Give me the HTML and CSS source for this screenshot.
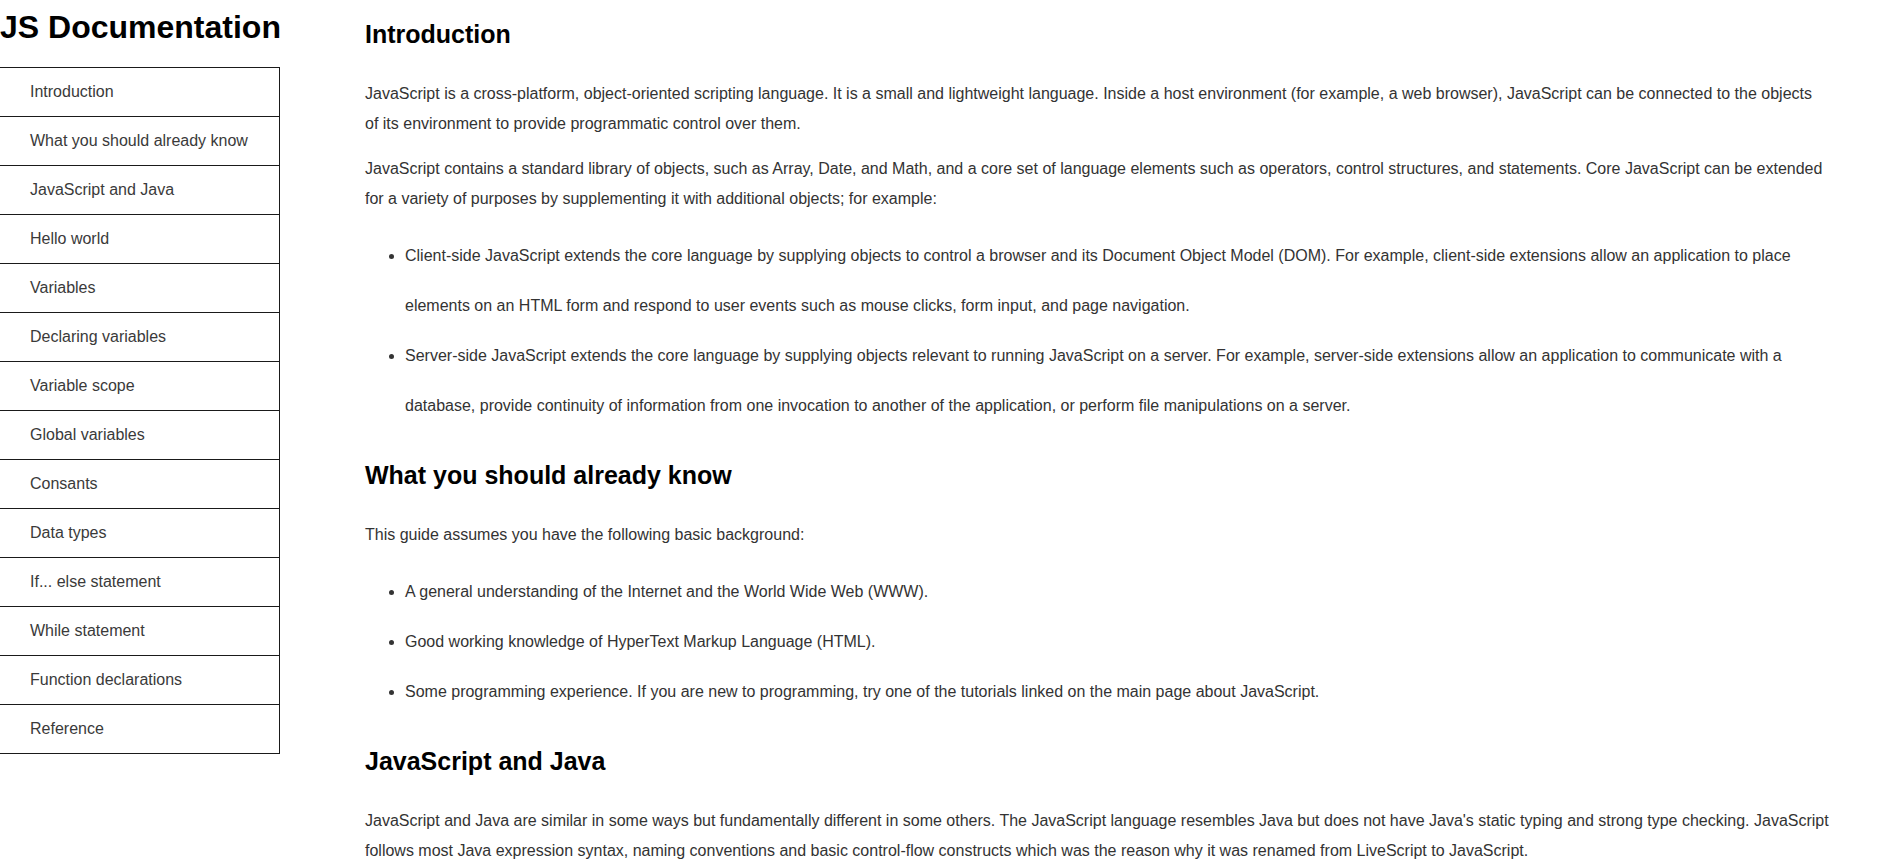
FILE: index.html
```html
<!DOCTYPE html>
<html lang="en">
<head>
<meta charset="utf-8">
<title>JS Documentation</title>
<link rel="stylesheet" href="styles.css">
</head>
<body>
<div class="page">
  <nav id="navbar" class="sidebar">
    <header class="sidebar-title">JS Documentation</header>
    <ul class="nav-list">
      <li><a class="nav-link" href="#Introduction">Introduction</a></li>
      <li><a class="nav-link" href="#What_you_should_already_know">What you should already know</a></li>
      <li><a class="nav-link" href="#JavaScript_and_Java">JavaScript and Java</a></li>
      <li><a class="nav-link" href="#Hello_world">Hello world</a></li>
      <li><a class="nav-link" href="#Variables">Variables</a></li>
      <li><a class="nav-link" href="#Declaring_variables">Declaring variables</a></li>
      <li><a class="nav-link" href="#Variable_scope">Variable scope</a></li>
      <li><a class="nav-link" href="#Global_variables">Global variables</a></li>
      <li><a class="nav-link" href="#Consants">Consants</a></li>
      <li><a class="nav-link" href="#Data_types">Data types</a></li>
      <li><a class="nav-link" href="#If_else_statement">If... else statement</a></li>
      <li><a class="nav-link" href="#While_statement">While statement</a></li>
      <li><a class="nav-link" href="#Function_declarations">Function declarations</a></li>
      <li><a class="nav-link" href="#Reference">Reference</a></li>
    </ul>
  </nav>
  <main id="main-doc" class="main">
    <section class="main-section" id="Introduction">
      <h2 class="section-title">Introduction</h2>
      <p>JavaScript is a cross-platform, object-oriented scripting language. It is a small and lightweight language. Inside a host environment (for example, a web browser), JavaScript can be connected to the objects of its environment to provide programmatic control over them.</p>
      <p>JavaScript contains a standard library of objects, such as Array, Date, and Math, and a core set of language elements such as operators, control structures, and statements. Core JavaScript can be extended for a variety of purposes by supplementing it with additional objects; for example:</p>
      <ul class="bullets">
        <li>Client-side JavaScript extends the core language by supplying objects to control a browser and its Document Object Model (DOM). For example, client-side extensions allow an application to place elements on an HTML form and respond to user events such as mouse clicks, form input, and page navigation.</li>
        <li>Server-side JavaScript extends the core language by supplying objects relevant to running JavaScript on a server. For example, server-side extensions allow an application to communicate with a database, provide continuity of information from one invocation to another of the application, or perform file manipulations on a server.</li>
      </ul>
    </section>
    <section class="main-section" id="What_you_should_already_know">
      <h2 class="section-title">What you should already know</h2>
      <p>This guide assumes you have the following basic background:</p>
      <ul class="bullets">
        <li>A general understanding of the Internet and the World Wide Web (WWW).</li>
        <li>Good working knowledge of HyperText Markup Language (HTML).</li>
        <li>Some programming experience. If you are new to programming, try one of the tutorials linked on the main page about JavaScript.</li>
      </ul>
    </section>
    <section class="main-section" id="JavaScript_and_Java">
      <h2 class="section-title">JavaScript and Java</h2>
      <p>JavaScript and Java are similar in some ways but fundamentally different in some others. The JavaScript language resembles Java but does not have Java's static typing and strong type checking. JavaScript follows most Java expression syntax, naming conventions and basic control-flow constructs which was the reason why it was renamed from LiveScript to JavaScript.</p>
    </section>
  </main>
</div>
</body>
</html>
```

FILE: styles.css
```css
html, body {
  margin: 0;
  padding: 0;
  background: #ffffff;
}

body {
  font-family: "Liberation Sans", Arial, sans-serif;
  font-size: 16px;
  color: #333333;
}

.page {
  display: flex;
  align-items: flex-start;
}

.sidebar {
  flex: 0 0 280px;
  width: 280px;
}

.sidebar-title {
  margin: 0;
  padding: 9px 0 21px;
  font-size: 32px;
  font-weight: bold;
  line-height: 37px;
  text-align: center;
  color: #000000;
  white-space: nowrap;
}

.nav-list {
  list-style: none;
  margin: 0;
  padding: 0;
  border-right: 1px solid #1a1a1a;
  border-bottom: 1px solid #1a1a1a;
}

.nav-list li {
  border-top: 1px solid #1a1a1a;
}

.nav-link {
  display: flex;
  align-items: center;
  height: 48px;
  padding-left: 30px;
  color: #3a3a3a;
  text-decoration: none;
}

.main {
  flex: 1 1 auto;
  min-width: 0;
  padding: 20px 56px 0 85px;
}

.section-title {
  margin: 30px 0 31px;
  font-size: 25px;
  line-height: 28px;
  font-weight: bold;
  color: #000000;
}

.main-section:first-child .section-title {
  margin-top: 0;
}

.main p {
  margin: 15px 0;
  line-height: 30px;
}

.bullets {
  margin: 17px 0 30px;
  padding-left: 40px;
  line-height: 50px;
}
```
